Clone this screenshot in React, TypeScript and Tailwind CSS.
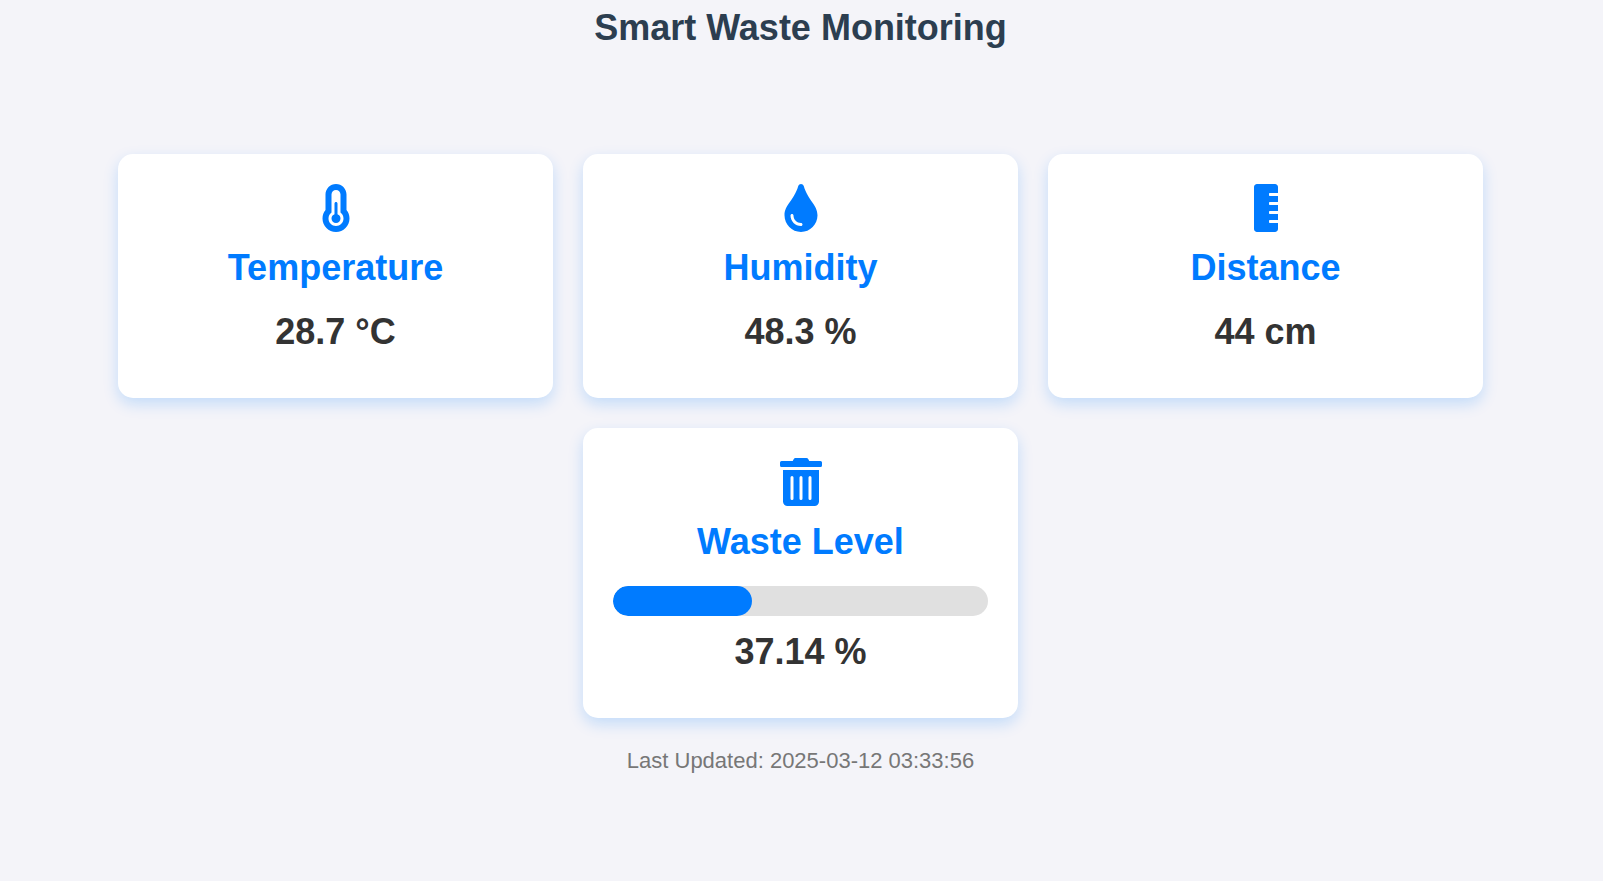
import type { ReactNode } from 'react';
import { FaRulerVertical, FaTint, FaTrashAlt } from 'react-icons/fa';

function ThermometerIcon() {
  return (
    <svg viewBox="0 0 320 512" className="h-12" fill="currentColor" aria-hidden="true">
      <path d="M176 322.9V208c0-8.75-7.25-16-16-16s-16 7.25-16 16v114.9c-18.62 6.625-32 24.25-32 45.1c0 26.5 21.5 48 48 48s48-21.5 48-48C208 347.1 194.6 329.5 176 322.9zM272 278.5V112C272 50.13 221.9 0 160 0S48 50.13 48 112v166.5C28.25 303.3 16 334 16 368c0 79.5 64.5 144 144 144s144-64.5 144-144C304 334 291.8 303.3 272 278.5zM160 448c-44.13 0-80-35.87-80-80c0-25.5 12.25-48.88 32-63.75V112c0-26.5 21.5-48 48-48s48 21.5 48 48v192.3c19.75 14.87 32 38.25 32 63.75C240 412.1 204.1 448 160 448z" />
    </svg>
  );
}

type CardProps = {
  icon: ReactNode;
  title: string;
  value: string;
  level?: number;
};

function SensorCard({ icon, title, value, level }: CardProps) {
  return (
    <section className="w-full max-w-[435px] rounded-[15px] bg-white px-[30px] pt-[30px] pb-[46px] text-center shadow-[0_6px_15px_rgba(0,123,255,0.2)]">
      <div className="flex h-12 justify-center text-5xl text-[#007bff]">{icon}</div>
      <h2 className="mt-[15px] text-4xl leading-[41px] font-bold text-[#007bff]">{title}</h2>
      {level !== undefined && (
        <div
          role="progressbar"
          aria-label={title}
          aria-valuenow={level}
          aria-valuemin={0}
          aria-valuemax={100}
          className="mt-6 -mb-2 h-[30px] overflow-hidden rounded-[15px] bg-[#e0e0e0]"
        >
          <div className="h-full rounded-[15px] bg-[#007bff]" style={{ width: `${level}%` }} />
        </div>
      )}
      <p className="mt-[23px] text-4xl leading-[41px] font-bold text-[#333]">{value}</p>
    </section>
  );
}

export default function App() {
  return (
    <div className="min-h-screen bg-[#f4f4f9] pt-[7px] pr-0.5 pb-10 text-center font-['Liberation_Sans',Arial,sans-serif]">
      <h1 className="text-4xl leading-[41px] font-bold text-[#2c3e50]">Smart Waste Monitoring</h1>
      <main className="mx-auto mt-[106px] flex max-w-[1400px] flex-wrap justify-center gap-[30px] px-4">
        <SensorCard icon={<ThermometerIcon />} title="Temperature" value="28.7 °C" />
        <SensorCard icon={<FaTint />} title="Humidity" value="48.3 %" />
        <SensorCard icon={<FaRulerVertical />} title="Distance" value="44 cm" />
        <SensorCard icon={<FaTrashAlt />} title="Waste Level" value="37.14 %" level={37.14} />
      </main>
      <footer className="mt-[30px] text-[22px] leading-[25px] text-[#777]">
        Last Updated: 2025-03-12 03:33:56
      </footer>
    </div>
  );
}
